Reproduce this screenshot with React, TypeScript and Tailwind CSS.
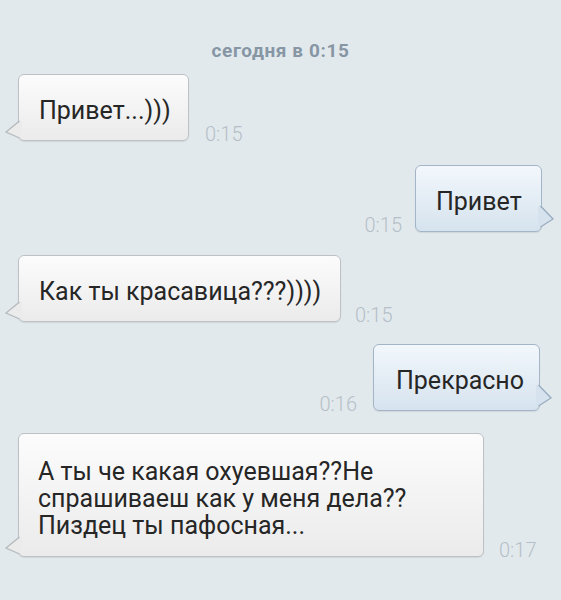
import React from "react";

function InTail() {
  return (
    <svg
      className="absolute left-[-14px] bottom-0"
      width="17"
      height="21"
      viewBox="0 0 17 21"
    >
      <path d="M15,2 L1,13 L15,19 L17,19 L17,2 Z" fill="#ebebeb" />
      <path d="M14.5,2 L1,13 L14.5,19" fill="none" stroke="#b5b9bc" strokeWidth="1.3" />
    </svg>
  );
}

function OutTail() {
  return (
    <svg
      className="absolute right-[-14px] bottom-0"
      width="17"
      height="26"
      viewBox="0 0 17 26"
    >
      <path d="M2,1 L15,14 L2,22 L0,22 L0,1 Z" fill="#d6e3ee" />
      <path d="M2.5,1 L15,14 L2.5,22" fill="none" stroke="#98acbf" strokeWidth="1.3" />
    </svg>
  );
}

function Time({ t }: { t: string }) {
  return (
    <span className="mb-[-3px] text-[20px] font-light leading-none text-[#b5bfc7]">
      {t}
    </span>
  );
}

export default function App() {
  return (
    <div className="w-[561px] h-[600px] overflow-hidden bg-[#e2e9ed] font-['Roboto',sans-serif] text-[#262626]">
      <div className="pt-[40px] text-center text-[19px] font-bold leading-[22px] tracking-[0.6px] text-[#8796a4]">
        сегодня в 0:15
      </div>

      {/* 1 incoming */}
      <div className="mt-[12px] ml-[18px] flex items-end gap-[16px]">
        <div className="relative w-[171px] rounded-[6px] border border-[#bdc1c4] bg-gradient-to-b from-[#fcfcfc] to-[#ebebeb] pl-[20px] pt-[22px] pb-[16px] text-[25px] leading-[27px] shadow-[0_1px_1px_rgba(0,0,0,0.08)]">
          Привет...)))
          <InTail />
        </div>
        <Time t="0:15" />
      </div>

      {/* 2 outgoing */}
      <div className="mt-[24px] mr-[19px] flex items-end justify-end gap-[13px]">
        <Time t="0:15" />
        <div className="relative w-[127px] rounded-[6px] border border-[#a3b5c6] bg-gradient-to-b from-[#f2f7fc] to-[#d6e3ee] pl-[20px] pt-[22px] pb-[16px] text-[25px] leading-[27px] shadow-[0_1px_1px_rgba(0,0,0,0.08)]">
          Привет
          <OutTail />
        </div>
      </div>

      {/* 3 incoming */}
      <div className="mt-[23px] ml-[18px] flex items-end gap-[14px]">
        <div className="relative w-[323px] rounded-[6px] border border-[#bdc1c4] bg-gradient-to-b from-[#fcfcfc] to-[#ebebeb] pl-[20px] pt-[22px] pb-[16px] text-[25px] leading-[27px] shadow-[0_1px_1px_rgba(0,0,0,0.08)]">
          Как ты красавица???))))
          <InTail />
        </div>
        <Time t="0:15" />
      </div>

      {/* 4 outgoing */}
      <div className="mt-[22px] mr-[21px] flex items-end justify-end gap-[16px]">
        <Time t="0:16" />
        <div className="relative w-[167px] rounded-[6px] border border-[#a3b5c6] bg-gradient-to-b from-[#f2f7fc] to-[#d6e3ee] pl-[22px] pt-[22px] pb-[16px] text-[25px] leading-[27px] shadow-[0_1px_1px_rgba(0,0,0,0.08)]">
          Прекрасно
          <OutTail />
        </div>
      </div>

      {/* 5 incoming */}
      <div className="mt-[22px] ml-[18px] flex items-end gap-[15px]">
        <div className="relative w-[466px] rounded-[6px] border border-[#bdc1c4] bg-gradient-to-b from-[#fcfcfc] to-[#ebebeb] pl-[19px] pt-[24px] pb-[17px] text-[25px] leading-[27px] shadow-[0_1px_1px_rgba(0,0,0,0.08)]">
          А ты че какая охуевшая??Не
          <br />
          спрашиваеш как у меня дела??
          <br />
          Пиздец ты пафосная...
          <InTail />
        </div>
        <Time t="0:17" />
      </div>
    </div>
  );
}
